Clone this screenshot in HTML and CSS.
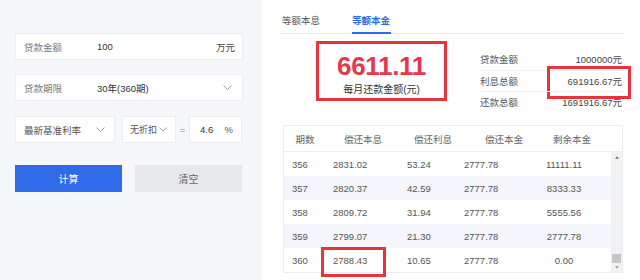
FILE: index.html
```html
<!DOCTYPE html>
<html lang="zh-CN">
<head>
<meta charset="utf-8">
<link rel="stylesheet" href="styles.css">
</head>
<body>
<div class="page">
  <div class="left">
    <div class="field">
      <span class="label">贷款金额</span>
      <span class="value">100</span>
      <span class="unit">万元</span>
    </div>
    <div class="field">
      <span class="label">贷款期限</span>
      <span class="value">30年(360期)</span>
      <svg class="chev" width="9" height="5" viewBox="0 0 9 5"><polyline points="0.5,0.5 4.5,4.5 8.5,0.5" fill="none" stroke="#a0a4ab" stroke-width="1"/></svg>
    </div>
    <div class="rate-row">
      <div class="select sel-base">
        <span>最新基准利率</span>
        <svg class="chev" width="9" height="5" viewBox="0 0 9 5"><polyline points="0.5,0.5 4.5,4.5 8.5,0.5" fill="none" stroke="#a0a4ab" stroke-width="1"/></svg>
      </div>
      <div class="select sel-disc">
        <span class="disc-text">无折扣</span>
        <svg class="chev" width="8" height="5" viewBox="0 0 8 5"><polyline points="0.5,0.5 4,4 7.5,0.5" fill="none" stroke="#a0a4ab" stroke-width="1"/></svg>
      </div>
      <span class="eq">=</span>
      <div class="select sel-rate">
        <span class="rate-val">4.6</span>
        <span class="pct">%</span>
      </div>
    </div>
    <div class="buttons">
      <div class="btn btn-primary">计算</div>
      <div class="btn btn-plain">清空</div>
    </div>
  </div>

  <div class="right">
    <div class="tabs">
      <div class="tab">等额本息</div>
      <div class="tab active">等额本金</div>
    </div>

    <div class="summary">
      <div class="monthly">
        <div class="big">6611.11</div>
        <div class="cap">每月还款金额(元)</div>
      </div>
      <div class="info">
        <div class="info-row"><span>贷款金额</span><span>1000000元</span></div>
        <div class="info-row mark"><span>利息总额</span><span>691916.67元</span></div>
        <div class="info-row"><span>还款总额</span><span>1691916.67元</span></div>
      </div>
    </div>

    <div class="table">
      <div class="thead">
        <span>期数</span><span>偿还本息</span><span>偿还利息</span><span>偿还本金</span><span>剩余本金</span><span></span>
      </div>
      <div class="tbody">
        <div class="rows">
          <div class="tr"><span>356</span><span>2831.02</span><span>53.24</span><span>2777.78</span><span class="c">11111.11</span></div>
          <div class="tr odd"><span>357</span><span>2820.37</span><span>42.59</span><span>2777.78</span><span class="c">8333.33</span></div>
          <div class="tr"><span>358</span><span>2809.72</span><span>31.94</span><span>2777.78</span><span class="c">5555.56</span></div>
          <div class="tr odd"><span>359</span><span>2799.07</span><span>21.30</span><span>2777.78</span><span class="c">2777.78</span></div>
          <div class="tr"><span>360</span><span class="hl">2788.43</span><span>10.65</span><span>2777.78</span><span class="c">0.00</span></div>
        </div>
        <div class="scrollbar">
          <span class="arr-up"></span>
          <span class="thumb"></span>
          <span class="arr-down"></span>
        </div>
      </div>
    </div>
  </div>
</div>
</body>
</html>
```

FILE: styles.css
```css
* { box-sizing: border-box; }
html, body { margin: 0; padding: 0; }
body {
  font-family: "Liberation Sans", "Noto Sans CJK SC", sans-serif;
  font-size: 9.5px;
  color: #333;
  background: #fff;
}
.page {
  display: flex;
  width: 640px;
  height: 280px;
  overflow: hidden;
}
.left {
  width: 262px;
  background: #f5f7fb;
  padding: 33px 19px 0 15px;
  display: flex;
  flex-direction: column;
}
.field {
  height: 27px;
  background: #fff;
  border: 1px solid #eceef3;
  display: flex;
  align-items: center;
  padding: 0 7px 0 8px;
  margin-bottom: 14px;
}
.field + .field { margin-bottom: 15px; }
.label { width: 73px; color: #777; }
.value { flex: 1; color: #333; }
.unit { color: #444; }
.chev { display: block; margin-right: 3px; flex: none; }
.rate-row {
  display: flex;
  align-items: center;
  height: 27px;
}
.select {
  height: 27px;
  background: #fff;
  border: 1px solid #eceef3;
  display: flex;
  align-items: center;
  color: #555;
  flex: none;
}
.sel-base { width: 100px; padding: 0 6px 0 8px; justify-content: space-between; }
.sel-disc { width: 54px; margin-left: 7px; padding: 0 8px 0 7px; justify-content: space-between; }
.disc-text { white-space: nowrap; font-size: 9px; }
.sel-disc .chev { margin: 0; }
.eq { width: 13px; text-align: center; color: #888; }
.sel-rate { width: 53px; padding: 0 8px 0 10px; justify-content: space-between; }
.rate-val { color: #333; }
.pct { color: #555; }
.buttons {
  display: flex;
  gap: 13px;
  margin-top: 22px;
}
.btn {
  width: 107px;
  height: 27px;
  display: flex;
  align-items: center;
  justify-content: center;
  font-size: 10px;
}
.btn-primary { background: #2f6ae8; color: #fff; }
.btn-plain { background: #e7e8ec; color: #666; }

.right {
  flex: 1;
  padding: 0 17px 0 19px;
  display: flex;
  flex-direction: column;
}
.tabs {
  display: flex;
  gap: 31px;
  border-bottom: 1px solid #e8eaee;
  padding-top: 14px;
  height: 34px;
}
.tab {
  position: relative;
  color: #555;
  padding-left: 1px;
  line-height: 13px;
}
.tab.active { color: #2f6ae8; font-weight: bold; }
.tab.active::after {
  content: "";
  position: absolute;
  left: 1px;
  right: -1px;
  top: 18px;
  height: 2px;
  background: #2f6ae8;
}
.summary {
  display: flex;
  margin-top: 7px;
  height: 71px;
}
.monthly {
  margin-left: 35px;
  width: 131px;
  height: 60px;
  border: 3px solid #e8323c;
  display: flex;
  flex-direction: column;
  align-items: center;
  padding-top: 9px;
}
.big {
  font-size: 26px;
  font-weight: bold;
  color: #e8364e;
  line-height: 26px;
  letter-spacing: -0.3px;
}
.cap {
  font-size: 10px;
  color: #333;
  margin-top: 2px;
}
.info {
  margin-left: auto;
  width: 143px;
  padding-top: 7px;
}
.info-row {
  position: relative;
  display: flex;
  justify-content: space-between;
  height: 21.5px;
  align-items: center;
  color: #444;
  padding-right: 1px;
}
.info-row + .info-row { border-top: 1px solid #eeeff2; }
.info-row span:first-child { color: #555; }
.mark::after {
  content: "";
  position: absolute;
  left: 67px;
  right: -8px;
  top: -5px;
  height: 27px;
  border: 3px solid #e8323c;
}
.table {
  margin-top: 13px;
  margin-left: 2px;
  width: 340px;
  border: 1px solid #ebedf1;
}
.thead {
  display: grid;
  grid-template-columns: 42px 74px 66px 76px 60px 1fr;
  height: 26px;
  align-items: center;
  text-align: center;
  color: #666;
  border-bottom: 1px solid #ebedf1;
}
.tbody {
  display: flex;
}
.rows { flex: 1; }
.tr {
  display: grid;
  grid-template-columns: 41px 74px 57px 65px 1fr;
  height: 24px;
  align-items: center;
  color: #555;
}
.tr span { padding-left: 8px; }
.tr span.c { padding-left: 0; padding-right: 4px; text-align: center; }
.tr.odd { background: #f4f6fb; }
.hl {
  position: relative;
}
.hl::after {
  content: "";
  position: absolute;
  left: -4px;
  width: 59px;
  top: -8px;
  height: 24px;
  border: 3px solid #e8323c;
}
.scrollbar {
  width: 11px;
  background: #f1f2f4;
  display: flex;
  flex-direction: column;
  align-items: center;
  padding: 4px 0 3px;
}
.arr-up {
  width: 0; height: 0;
  border-left: 2.5px solid transparent;
  border-right: 2.5px solid transparent;
  border-bottom: 3px solid #888;
}
.thumb {
  margin-top: auto;
  width: 9px;
  height: 9px;
  background: #c4c5c9;
}
.arr-down {
  margin-top: 3px;
  width: 0; height: 0;
  border-left: 2.5px solid transparent;
  border-right: 2.5px solid transparent;
  border-top: 3px solid #aaa;
}
```
